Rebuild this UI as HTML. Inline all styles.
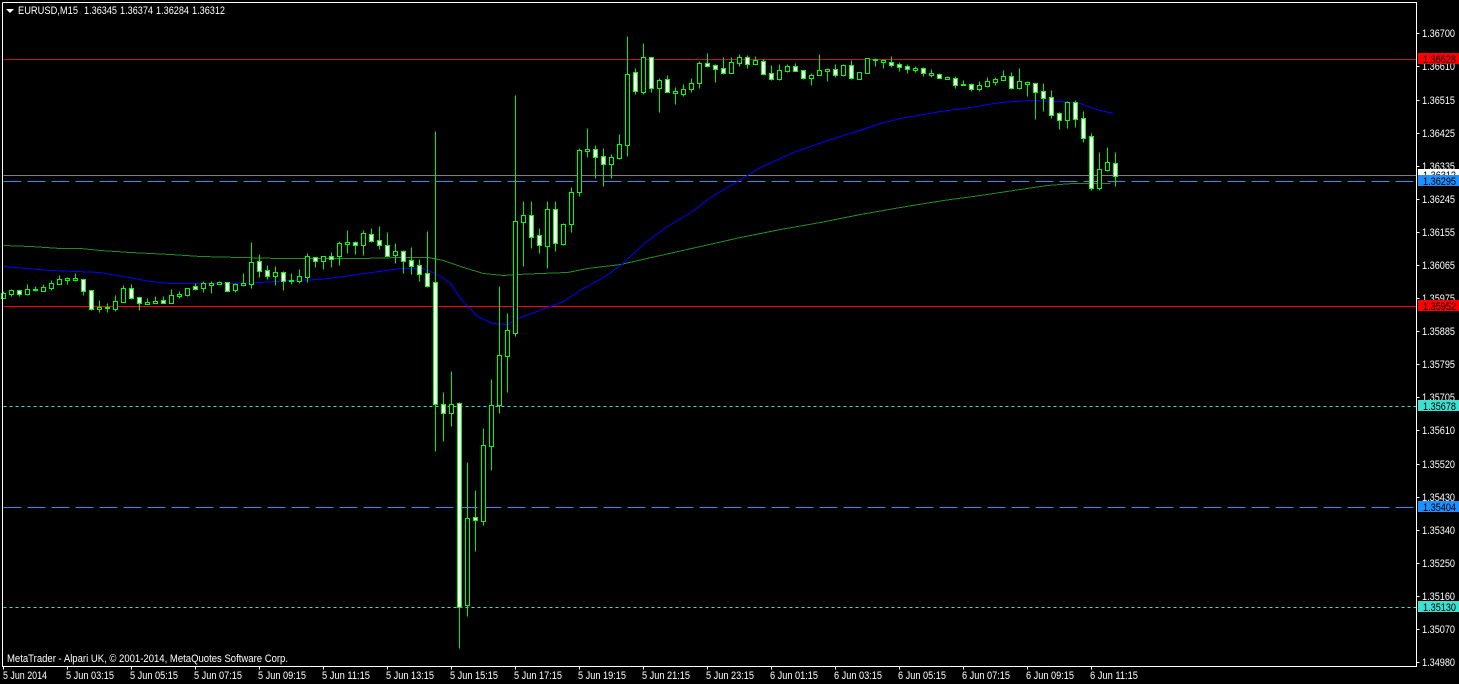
<!DOCTYPE html>
<html lang="en">
<head>
<meta charset="utf-8">
<title>EURUSD,M15</title>
<style>
html,body{margin:0;padding:0;background:#000;width:1459px;height:684px;overflow:hidden}
svg{display:block}
text{font-family:"Liberation Sans",sans-serif;font-size:11px;fill:#fff}
.d{fill:#000}
</style>
</head>
<body>
<svg width="1459" height="684" viewBox="0 0 1459 684" xmlns="http://www.w3.org/2000/svg">
<rect width="1459" height="684" fill="#000"/>
<g shape-rendering="crispEdges" fill="none" transform="translate(.5 .5)">
<!-- horizontal levels -->
<path d="M3 59H1416" stroke="#c01818"/>
<path d="M3 175H1416" stroke="#808080"/>
<path d="M3 181H1416M3 507H1416" stroke="#1e90ff" stroke-dasharray="18 6"/>
<path d="M3 306H1416" stroke="#f00"/>
<path d="M3 406H1416M3 607H1416" stroke="#40e0d0" stroke-dasharray="3 3"/>
<!-- moving averages -->
<polyline stroke="#228b22" points="3,245 30,246 60,248 80,248 100,250 130,252 170,254 200,256 240,257 280,258 360,258 400,257 428,257 443,260 463,267 483,273 503,275 517,274 540,273 567,272 587,268 620,264 660,255 700,246 740,237 780,229 820,222 860,214 900,207 943,200 980,195 1013,190 1047,185 1072,183 1110,183"/>
<polyline stroke="#00f" points="3,266 50,270 100,272 150,281 170,283 230,283 260,282 290,280 320,279 350,275 400,268 423,268 428,270 437,274 450,283 460,298 477,316 492,323 507,324 520,317 547,307 563,301 583,288 603,277 620,265 645,242 667,226 692,211 710,197 737,181 760,167 793,152 827,140 853,132 880,123 900,118 940,111 970,107 1000,102 1030,100 1060,101 1080,103 1090,107 1100,110 1113,113"/>
<!-- wicks -->
<path stroke="#0e0" d="M3 291V298M11 289V296M19 290V296M27 284V295M35 286V291M43 284V291M51 280V290M59 275V284M67 277V284M75 273V281M83 279V295M91 290V310M99 300V312M107 303V312M115 295V311M123 285V302M131 284V299M139 297V310M147 298V304M155 296V303M163 296V303M171 289V303M179 291V298M187 288V296M195 283V290M203 281V292M211 281V293M219 281V284M227 282V291M235 283V292M243 273V286M251 242V288M259 254V277M267 265V279M275 266V285M283 271V290M291 273V284M299 269V283M307 253V282M315 257V267M323 256V269M331 252V267M339 241V265M347 230V253M355 241V254M363 230V255M371 228V242M379 226V249M387 232V256M395 243V263M403 250V273M411 247V274M419 259V281M427 231V287M435 131V451M443 392V441M451 371V426M459 402V648M467 462V616M475 490V551M483 428V525M491 379V470M499 286V413M507 313V392M515 95V336M523 201V266M531 201V248M539 228V253M547 201V268M555 201V251M563 223V245M571 187V232M579 148V196M587 128V157M595 145V178M603 148V186M611 154V178M619 134V159M627 36V156M635 68V94M643 43V94M651 57V92M659 78V112M667 75V92M675 87V104M683 84V96M691 78V92M699 61V88M707 53V67M715 64V82M723 57V74M731 57V73M739 54V66M747 55V68M755 56V64M763 59V74M771 65V80M779 64V80M787 64V72M795 63V71M803 70V79M811 73V85M819 54V75M827 68V81M835 64V77M843 64V76M851 60V79M867 58V73M875 58V66M883 59V68M891 56V67M899 62V71M907 64V73M915 66V72M923 67V76M931 69V77M939 73V78M947 76V79M955 76V88M963 80V85M971 83V91M979 81V91M987 77V87M995 77V85M1003 70V80M1011 72V89M1019 68V89M1027 81V96M1035 83V119M1043 83V111M1051 90V118M1059 112V129M1067 101V128M1075 100V127M1083 111V142M1091 133V190M1099 152V190M1107 147V171M1115 152V186"/>
<!-- bearish/black bodies -->
<path stroke="#0f0" fill="#000" d="M1 293h4v5h-4zM9 290h4v4h-4zM25 289h4v5h-4zM33 289h4v1h-4zM41 287h4v4h-4zM49 283h4v5h-4zM57 279h4v5h-4zM65 278h4v2h-4zM73 278h4v2h-4zM97 307h4v2h-4zM105 307h4v1h-4zM113 301h4v8h-4zM121 288h4v14h-4zM145 302h4v2h-4zM153 301h4v2h-4zM169 295h4v8h-4zM177 294h4v2h-4zM185 288h4v7h-4zM201 283h4v5h-4zM209 283h4v2h-4zM217 282h4v2h-4zM233 284h4v6h-4zM241 283h4v2h-4zM249 262h4v22h-4zM273 272h4v4h-4zM289 280h4v1h-4zM297 276h4v5h-4zM305 256h4v21h-4zM321 256h4v5h-4zM337 243h4v13h-4zM345 242h4v2h-4zM361 233h4v12h-4zM393 251h4v4h-4zM449 404h4v9h-4zM465 518h4v87h-4zM481 445h4v76h-4zM489 405h4v41h-4zM497 355h4v50h-4zM505 330h4v26h-4zM513 221h4v112h-4zM521 215h4v7h-4zM545 209h4v37h-4zM561 224h4v20h-4zM569 192h4v32h-4zM577 150h4v42h-4zM585 149h4v2h-4zM609 157h4v7h-4zM617 144h4v14h-4zM625 74h4v71h-4zM641 57h4v35h-4zM657 80h4v8h-4zM673 91h4v2h-4zM681 89h4v5h-4zM689 83h4v6h-4zM697 63h4v20h-4zM729 62h4v11h-4zM737 57h4v6h-4zM753 60h4v4h-4zM777 70h4v9h-4zM785 66h4v5h-4zM809 75h4v3h-4zM817 70h4v5h-4zM825 69h4v2h-4zM841 65h4v10h-4zM857 72h4v7h-4zM865 58h4v15h-4zM873 59h4v1h-4zM881 60h4v2h-4zM913 68h4v2h-4zM929 73h4v2h-4zM945 77h4v2h-4zM961 84h4v1h-4zM977 85h4v4h-4zM985 81h4v5h-4zM993 79h4v3h-4zM1001 76h4v4h-4zM1017 81h4v7h-4zM1025 82h4v2h-4zM1065 102h4v18h-4zM1097 169h4v19h-4zM1105 162h4v8h-4z"/>
<!-- bullish/white bodies -->
<path stroke="#0f0" fill="#fff" d="M17 290h4v4h-4zM81 279h4v12h-4zM89 290h4v19h-4zM129 288h4v10h-4zM137 297h4v6h-4zM161 300h4v3h-4zM193 286h4v3h-4zM225 282h4v9h-4zM257 261h4v10h-4zM265 270h4v6h-4zM281 272h4v9h-4zM313 257h4v4h-4zM329 256h4v3h-4zM353 242h4v3h-4zM369 234h4v7h-4zM377 240h4v5h-4zM385 245h4v11h-4zM401 251h4v10h-4zM409 260h4v6h-4zM417 265h4v9h-4zM425 273h4v13h-4zM433 282h4v122h-4zM441 404h4v9h-4zM457 403h4v204h-4zM473 517h4v3h-4zM529 215h4v22h-4zM537 235h4v10h-4zM553 209h4v34h-4zM593 149h4v8h-4zM601 156h4v8h-4zM633 72h4v19h-4zM649 57h4v31h-4zM665 79h4v13h-4zM705 63h4v3h-4zM713 65h4v4h-4zM721 68h4v5h-4zM745 57h4v7h-4zM761 61h4v13h-4zM769 73h4v6h-4zM793 66h4v5h-4zM801 70h4v8h-4zM833 69h4v6h-4zM849 65h4v13h-4zM889 62h4v3h-4zM897 64h4v3h-4zM905 66h4v3h-4zM921 68h4v5h-4zM937 74h4v4h-4zM953 78h4v7h-4zM969 84h4v5h-4zM1009 76h4v12h-4zM1033 83h4v9h-4zM1041 91h4v7h-4zM1049 97h4v18h-4zM1057 113h4v7h-4zM1073 102h4v17h-4zM1081 118h4v20h-4zM1089 136h4v52h-4zM1113 163h4v13h-4z"/>
<!-- chart frame -->
<path stroke="#fff" d="M2 2V666H1416V2H2M1416 33h3M1416 66h3M1416 100h3M1416 133h3M1416 166h3M1416 199h3M1416 232h3M1416 265h3M1416 298h3M1416 331h3M1416 364h3M1416 397h3M1416 430h3M1416 464h3M1416 497h3M1416 530h3M1416 563h3M1416 596h3M1416 629h3M1416 662h3M3 666v3M67 666v3M131 666v3M195 666v3M259 666v3M323 666v3M387 666v3M451 666v3M515 666v3M579 666v3M643 666v3M707 666v3M771 666v3M835 666v3M899 666v3M963 666v3M1027 666v3M1091 666v3"/>
</g>
<polygon points="6,9 14,9 10,13" fill="#fff"/>
<text x="18" y="14" textLength="60" lengthAdjust="spacingAndGlyphs">EURUSD,M15</text>
<text x="84" y="14" textLength="33" lengthAdjust="spacingAndGlyphs">1.36345</text>
<text x="120" y="14" textLength="33" lengthAdjust="spacingAndGlyphs">1.36374</text>
<text x="156" y="14" textLength="33" lengthAdjust="spacingAndGlyphs">1.36284</text>
<text x="192" y="14" textLength="33" lengthAdjust="spacingAndGlyphs">1.36312</text>
<text x="7" y="662" textLength="281" lengthAdjust="spacingAndGlyphs">MetaTrader - Alpari UK, © 2001-2014, MetaQuotes Software Corp.</text>
<g>
<text x="1422" y="37" textLength="33" lengthAdjust="spacingAndGlyphs">1.36700</text>
<text x="1422" y="70" textLength="33" lengthAdjust="spacingAndGlyphs">1.36610</text>
<text x="1422" y="104" textLength="33" lengthAdjust="spacingAndGlyphs">1.36515</text>
<text x="1422" y="137" textLength="33" lengthAdjust="spacingAndGlyphs">1.36425</text>
<text x="1422" y="170" textLength="33" lengthAdjust="spacingAndGlyphs">1.36335</text>
<text x="1422" y="203" textLength="33" lengthAdjust="spacingAndGlyphs">1.36245</text>
<text x="1422" y="236" textLength="33" lengthAdjust="spacingAndGlyphs">1.36155</text>
<text x="1422" y="269" textLength="33" lengthAdjust="spacingAndGlyphs">1.36065</text>
<text x="1422" y="302" textLength="33" lengthAdjust="spacingAndGlyphs">1.35975</text>
<text x="1422" y="335" textLength="33" lengthAdjust="spacingAndGlyphs">1.35885</text>
<text x="1422" y="368" textLength="33" lengthAdjust="spacingAndGlyphs">1.35795</text>
<text x="1422" y="401" textLength="33" lengthAdjust="spacingAndGlyphs">1.35705</text>
<text x="1422" y="434" textLength="33" lengthAdjust="spacingAndGlyphs">1.35610</text>
<text x="1422" y="468" textLength="33" lengthAdjust="spacingAndGlyphs">1.35520</text>
<text x="1422" y="501" textLength="33" lengthAdjust="spacingAndGlyphs">1.35430</text>
<text x="1422" y="534" textLength="33" lengthAdjust="spacingAndGlyphs">1.35340</text>
<text x="1422" y="567" textLength="33" lengthAdjust="spacingAndGlyphs">1.35250</text>
<text x="1422" y="600" textLength="33" lengthAdjust="spacingAndGlyphs">1.35160</text>
<text x="1422" y="633" textLength="33" lengthAdjust="spacingAndGlyphs">1.35070</text>
<text x="1422" y="666" textLength="33" lengthAdjust="spacingAndGlyphs">1.34980</text>
</g>
<g>
<text x="3" y="679" textLength="44" lengthAdjust="spacingAndGlyphs">5 Jun 2014</text>
<text x="66" y="679" textLength="48" lengthAdjust="spacingAndGlyphs">5 Jun 03:15</text>
<text x="130" y="679" textLength="48" lengthAdjust="spacingAndGlyphs">5 Jun 05:15</text>
<text x="194" y="679" textLength="48" lengthAdjust="spacingAndGlyphs">5 Jun 07:15</text>
<text x="258" y="679" textLength="48" lengthAdjust="spacingAndGlyphs">5 Jun 09:15</text>
<text x="322" y="679" textLength="48" lengthAdjust="spacingAndGlyphs">5 Jun 11:15</text>
<text x="386" y="679" textLength="48" lengthAdjust="spacingAndGlyphs">5 Jun 13:15</text>
<text x="450" y="679" textLength="48" lengthAdjust="spacingAndGlyphs">5 Jun 15:15</text>
<text x="514" y="679" textLength="48" lengthAdjust="spacingAndGlyphs">5 Jun 17:15</text>
<text x="578" y="679" textLength="48" lengthAdjust="spacingAndGlyphs">5 Jun 19:15</text>
<text x="642" y="679" textLength="48" lengthAdjust="spacingAndGlyphs">5 Jun 21:15</text>
<text x="706" y="679" textLength="48" lengthAdjust="spacingAndGlyphs">5 Jun 23:15</text>
<text x="770" y="679" textLength="48" lengthAdjust="spacingAndGlyphs">6 Jun 01:15</text>
<text x="834" y="679" textLength="48" lengthAdjust="spacingAndGlyphs">6 Jun 03:15</text>
<text x="898" y="679" textLength="48" lengthAdjust="spacingAndGlyphs">6 Jun 05:15</text>
<text x="962" y="679" textLength="48" lengthAdjust="spacingAndGlyphs">6 Jun 07:15</text>
<text x="1026" y="679" textLength="48" lengthAdjust="spacingAndGlyphs">6 Jun 09:15</text>
<text x="1090" y="679" textLength="48" lengthAdjust="spacingAndGlyphs">6 Jun 11:15</text>
</g>
<!-- price tags -->
<g style="--x:0">
<rect x="1418" y="53" width="41" height="11" fill="#f00"/>
<text x="1423" y="63" textLength="33" lengthAdjust="spacingAndGlyphs" style="fill:#000">1.36628</text>
<rect x="1418" y="169" width="41" height="11" fill="#fff"/>
<text x="1423" y="179" textLength="33" lengthAdjust="spacingAndGlyphs" style="fill:#000">1.36312</text>
<rect x="1418" y="175" width="41" height="11" fill="#1e90ff"/>
<text x="1423" y="185" textLength="33" lengthAdjust="spacingAndGlyphs" style="fill:#000">1.36295</text>
<rect x="1418" y="300" width="41" height="11" fill="#f00"/>
<text x="1423" y="310" textLength="33" lengthAdjust="spacingAndGlyphs" style="fill:#000">1.35952</text>
<rect x="1418" y="400" width="41" height="11" fill="#40e0d0"/>
<text x="1423" y="410" textLength="33" lengthAdjust="spacingAndGlyphs" style="fill:#000">1.35678</text>
<rect x="1418" y="501" width="41" height="11" fill="#1e90ff"/>
<text x="1423" y="511" textLength="33" lengthAdjust="spacingAndGlyphs" style="fill:#000">1.35404</text>
<rect x="1418" y="601" width="41" height="11" fill="#40e0d0"/>
<text x="1423" y="611" textLength="33" lengthAdjust="spacingAndGlyphs" style="fill:#000">1.35130</text>
</g>
</svg>
</body>
</html>
